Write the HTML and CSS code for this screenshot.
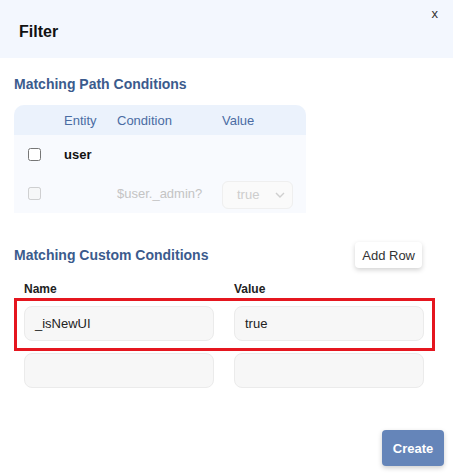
FILE: index.html
```html
<!DOCTYPE html>
<html>
<head>
<meta charset="utf-8">
<link rel="stylesheet" href="styles.css">
</head>
<body>
<div class="modal">
  <div class="modal-header">
    <h1 class="modal-title">Filter</h1>
    <button class="close-btn">x</button>
  </div>
  <div class="modal-body">
    <h2 class="section-title path-title">Matching Path Conditions</h2>
    <div class="path-table">
      <div class="path-row path-head">
        <span></span>
        <span>Entity</span>
        <span>Condition</span>
        <span>Value</span>
      </div>
      <div class="path-row row-entity">
        <span class="cell-check"><input type="checkbox"></span>
        <span class="entity-name">user</span>
        <span></span>
        <span></span>
      </div>
      <div class="path-row row-cond">
        <span class="cell-check"><input type="checkbox" disabled></span>
        <span></span>
        <span class="cond-text">$user._admin?</span>
        <span class="select-fake">
          <span>true</span>
          <svg class="chev" width="10" height="6" viewBox="0 0 10 6"><path d="M1 1l4 4 4-4" fill="none" stroke="#cfcfcf" stroke-width="1.4"/></svg>
        </span>
      </div>
    </div>

    <div class="custom-head">
      <h2 class="section-title">Matching Custom Conditions</h2>
      <button class="add-row">Add Row</button>
    </div>
    <div class="field-labels">
      <span>Name</span>
      <span>Value</span>
    </div>
    <div class="custom-row highlighted">
      <div class="text-input">_isNewUI</div>
      <div class="text-input">true</div>
    </div>
    <div class="custom-row">
      <div class="text-input"></div>
      <div class="text-input"></div>
    </div>
    <div class="footer">
      <button class="create-btn">Create</button>
    </div>
  </div>
</div>
</body>
</html>
```

FILE: styles.css
```css
* { box-sizing: border-box; }
html, body {
  margin: 0;
  padding: 0;
  background: #ffffff;
  font-family: "Liberation Sans", Arial, sans-serif;
  color: #222;
}
.modal {
  width: 453px;
  height: 474px;
  position: relative;
  background: #fff;
}
.modal-header {
  height: 58px;
  background: #f3f7fe;
  padding: 22px 0 0 19px;
}
.modal-title {
  margin: 0;
  font-size: 16px;
  line-height: 20px;
  font-weight: bold;
  color: #111;
}
.close-btn {
  position: absolute;
  top: 6px;
  right: 15px;
  border: 0;
  background: transparent;
  padding: 0;
  font-family: "Liberation Sans", Arial, sans-serif;
  font-size: 13px;
  line-height: 16px;
  color: #333;
}
.modal-body {
  padding: 0 18px 0 14px;
}
.section-title {
  margin: 0;
  font-size: 14px;
  line-height: 17px;
  font-weight: bold;
  color: #3b5b8d;
}
.path-title {
  margin-top: 18px;
}
.path-table {
  margin-top: 12px;
  width: 292px;
  background: #f8fafe;
  border-radius: 10px 10px 0 0;
}
.path-row {
  display: grid;
  grid-template-columns: 50px 53px 105px 1fr;
  align-items: center;
  font-size: 13px;
}
.path-head {
  height: 30px;
  background: #ebf2fc;
  border-radius: 10px 10px 0 0;
  color: #4a6ca3;
}
.row-entity {
  height: 39px;
}
.row-cond {
  height: 39px;
}
.cell-check {
  padding-left: 14px;
  display: flex;
  align-items: center;
}
.cell-check input {
  margin: 0;
  width: 13px;
  height: 13px;
}
.entity-name {
  font-weight: bold;
  color: #111;
}
.cond-text {
  color: #c4c4c4;
}
.select-fake {
  width: 71px;
  height: 28px;
  margin-top: 2px;
  border: 1px solid #efefef;
  border-radius: 6px;
  background: #fafafa;
  color: #cdcdcd;
  display: flex;
  align-items: center;
  justify-content: space-between;
  padding: 0 7px 0 14px;
  font-size: 13px;
}
.custom-head {
  margin-top: 29px;
  height: 26px;
  display: flex;
  align-items: center;
  justify-content: space-between;
}
.add-row {
  height: 26px;
  margin-right: 13px;
  padding: 0 7px;
  border: 0;
  border-radius: 4px;
  background: #fff;
  box-shadow: 0 2px 5px rgba(0, 0, 0, 0.18);
  font-family: "Liberation Sans", Arial, sans-serif;
  font-size: 13px;
  color: #333;
}
.field-labels {
  margin-top: 14px;
  display: grid;
  grid-template-columns: 190px 190px;
  column-gap: 20px;
  padding-left: 10px;
  font-size: 12px;
  line-height: 14px;
  font-weight: bold;
  color: #222;
}
.custom-row {
  display: grid;
  grid-template-columns: 190px 190px;
  column-gap: 20px;
  padding: 0 0 0 10px;
  margin-top: 2px;
}
.custom-row.highlighted {
  margin-top: 2px;
  width: 421px;
  border: 3px solid #e5161f;
  padding: 5px 8px 7px 7px;
}
.text-input {
  height: 35px;
  border: 1px solid #ebebeb;
  border-radius: 8px;
  background: #f7f7f7;
  padding: 0 10px;
  display: flex;
  align-items: center;
  font-size: 13px;
  color: #222;
}
.footer {
  margin-top: 42px;
  display: flex;
  justify-content: flex-end;
  margin-right: -9px;
}
.create-btn {
  width: 62px;
  height: 36px;
  border: 0;
  border-radius: 4px;
  background: #6585b9;
  color: #fff;
  font-family: "Liberation Sans", Arial, sans-serif;
  font-size: 13px;
  font-weight: bold;
  box-shadow: 0 2px 5px rgba(0, 0, 0, 0.2);
}
```
